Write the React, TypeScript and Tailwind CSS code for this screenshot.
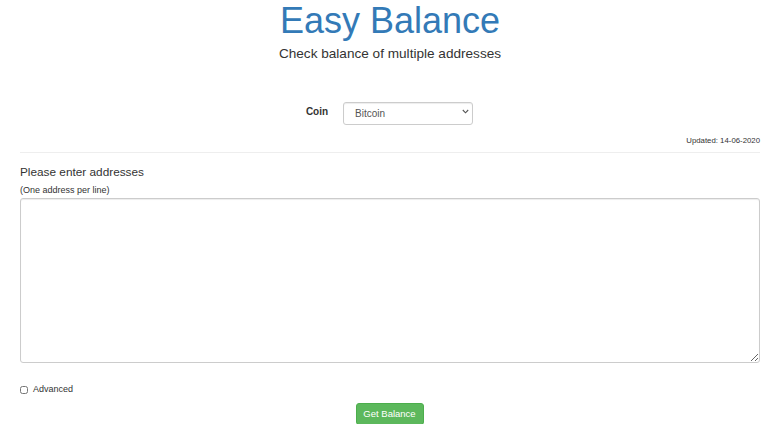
import React from "react";

export default function App() {
  return (
    <div
      className="min-h-[424px] bg-white text-[#333]"
      style={{ fontFamily: '"Liberation Sans", Arial, sans-serif' }}
    >
      <div className="pl-[20px] pr-[15px]">
        <h1 className="text-center text-[36px] leading-[41px] text-[#337ab7]">
          Easy Balance
        </h1>
        <p className="text-center text-[13.6px] leading-[16px] mt-[5px]">
          Check balance of multiple addresses
        </p>

        <div className="flex items-center justify-center mt-[38px] h-[23px]">
          <label className="font-bold text-[10px] mr-[15px] ml-[-1px]">Coin</label>
          <div className="relative w-[130px] h-[23px]">
            <select
              className="appearance-none w-full h-full border border-[#ccc] rounded-[3px] bg-white pl-[11px] text-[10px] text-[#555] shadow-[inset_0_1px_1px_rgba(0,0,0,0.075)]"
              defaultValue="bitcoin"
            >
              <option value="bitcoin">Bitcoin</option>
            </select>
            <svg
              className="absolute right-[4px] top-[9px] pointer-events-none"
              width="7"
              height="5"
              viewBox="0 0 7 5"
            >
              <path d="M0.8 1 L3.5 3.8 L6.2 1" fill="none" stroke="#555" strokeWidth="1.1" />
            </svg>
          </div>
        </div>

        <div className="text-right text-[7.8px] leading-[10px] mt-[13px] text-[#333]">
          Updated: 14-06-2020
        </div>
        <div className="border-t border-[#eee] mt-[6px]" />

        <h4 className="text-[11.8px] leading-[14px] mt-[12px]">Please enter addresses</h4>
        <div className="text-[9px] leading-[10px] mt-[6px]">(One address per line)</div>
        <textarea className="block w-full h-[165px] mt-[3px] border border-[#ccc] rounded-[3px] shadow-[inset_0_1px_1px_rgba(0,0,0,0.075)] resize-y" />

        <label className="flex items-center mt-[21px] text-[9px] leading-[11px]">
          <input type="checkbox" className="w-[8px] h-[8px] m-0 mr-[5px]" />
          Advanced
        </label>

        <div className="flex justify-center mt-[8px] pb-[1px]">
          <button className="bg-[#5cb85c] border border-[#4cae4c] text-white text-[9.5px] rounded-[3px] w-[68px] h-[22px] ml-[-1px]">
            Get Balance
          </button>
        </div>
      </div>
    </div>
  );
}
